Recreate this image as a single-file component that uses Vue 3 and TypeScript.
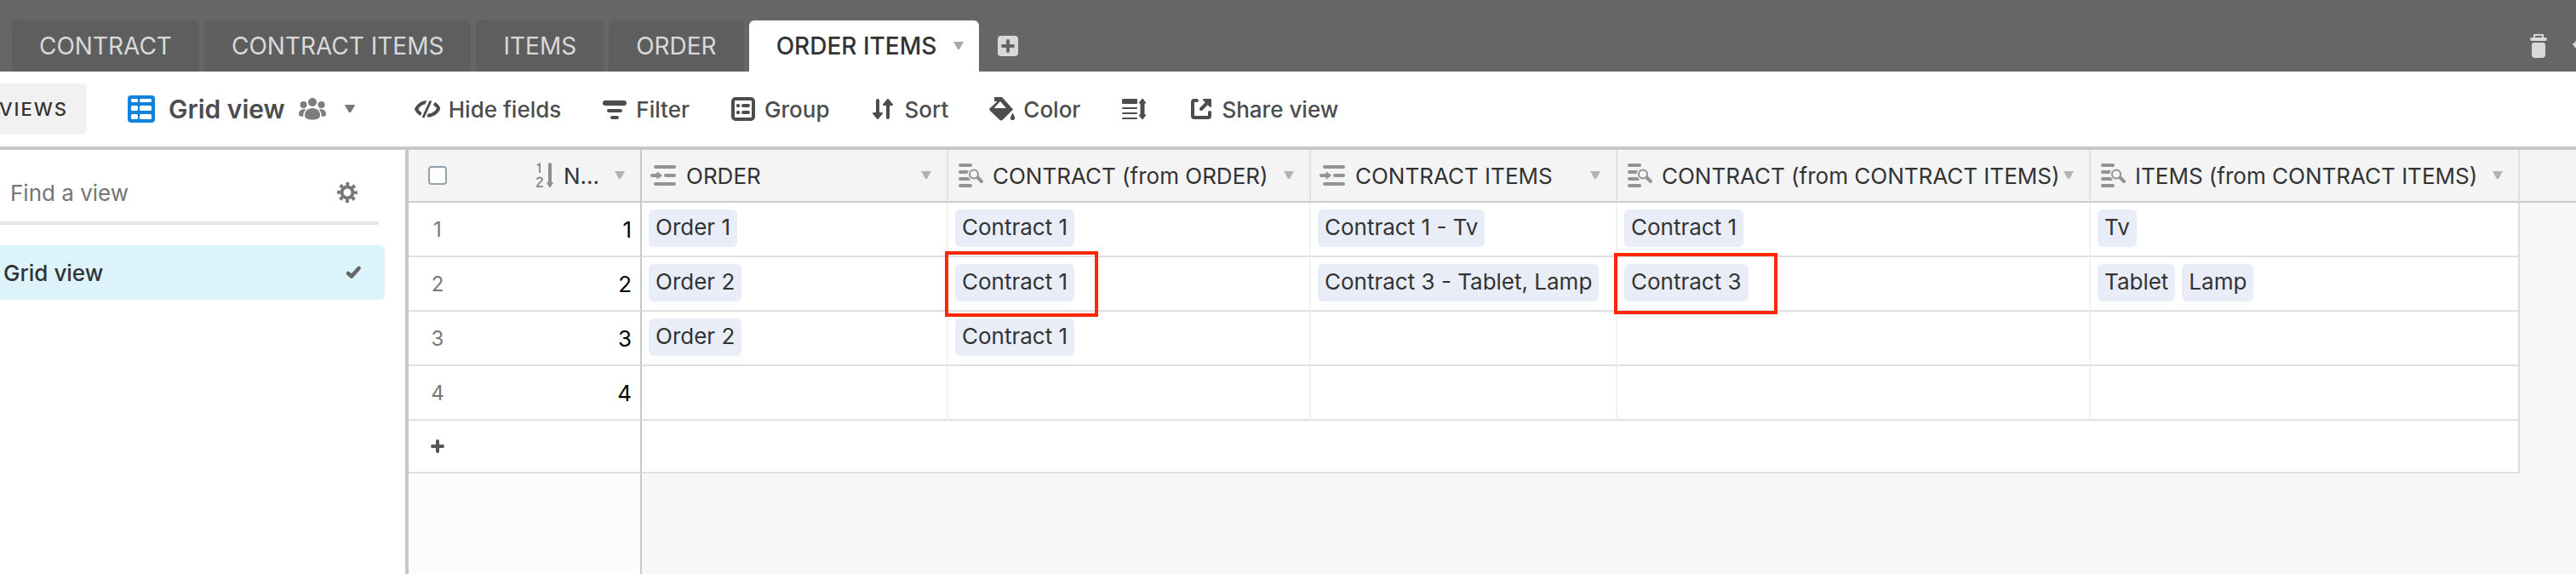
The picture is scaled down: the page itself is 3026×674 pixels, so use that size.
<script setup lang="ts">
import { ref } from 'vue'

interface Column {
  name: string
  kind: 'link' | 'lookup'
  size: string
}

interface Cell {
  chips: string[]
  mark?: string
}

interface Row {
  id: number
  cells: Cell[]
}

const tabs = ['CONTRACT', 'CONTRACT ITEMS', 'ITEMS', 'ORDER', 'ORDER ITEMS']
const activeTab = ref('ORDER ITEMS')
const search = ref('')

const columns: Column[] = [
  { name: 'ORDER', kind: 'link', size: 'c-order' },
  { name: 'CONTRACT (from ORDER)', kind: 'lookup', size: 'c-contract' },
  { name: 'CONTRACT ITEMS', kind: 'link', size: 'c-items' },
  { name: 'CONTRACT (from CONTRACT ITEMS)', kind: 'lookup', size: 'c-from-items' },
  { name: 'ITEMS (from CONTRACT ITEMS)', kind: 'lookup', size: 'c-last' },
]

const rows: Row[] = [
  {
    id: 1,
    cells: [
      { chips: ['Order 1'] },
      { chips: ['Contract 1'] },
      { chips: ['Contract 1 - Tv'] },
      { chips: ['Contract 1'] },
      { chips: ['Tv'] },
    ],
  },
  {
    id: 2,
    cells: [
      { chips: ['Order 2'] },
      { chips: ['Contract 1'], mark: 'mark-a' },
      { chips: ['Contract 3 - Tablet, Lamp'] },
      { chips: ['Contract 3'], mark: 'mark-b' },
      { chips: ['Tablet', 'Lamp'] },
    ],
  },
  {
    id: 3,
    cells: [
      { chips: ['Order 2'] },
      { chips: ['Contract 1'] },
      { chips: [] },
      { chips: [] },
      { chips: [] },
    ],
  },
  { id: 4, cells: [{ chips: [] }, { chips: [] }, { chips: [] }, { chips: [] }, { chips: [] }] },
]
</script>

<template>
  <div class="app">
    <header class="topbar">
      <nav class="tabs" aria-label="Tables">
        <button
          v-for="tab in tabs"
          :key="tab"
          type="button"
          class="tab"
          :class="{ active: tab === activeTab }"
          @click="activeTab = tab"
        >
          {{ tab }}
          <svg v-if="tab === activeTab" class="caret" width="12" height="10" viewBox="0 0 12 10">
            <path d="M0 0H12L7 9H5Z" fill="#aaa" />
          </svg>
        </button>
      </nav>
      <button type="button" class="bare" aria-label="Add table">
        <svg width="24" height="24" viewBox="0 0 24 24">
          <rect width="24" height="24" rx="4" fill="#d9d9d9" />
          <path d="M12 6V18M6 12H18" stroke="#666" stroke-width="4" stroke-linecap="round" />
        </svg>
      </button>
      <div class="topbar-end">
        <button type="button" class="bare" aria-label="Trash">
          <svg width="20" height="28" viewBox="0 0 20 28" fill="#d9d9d9">
            <path d="M5 5V1H15V5" fill="none" stroke="#d9d9d9" stroke-width="2" />
            <rect y="4" width="20" height="4" rx="2" />
            <path d="M2 13Q2 10 5 10H15Q18 10 18 13V24Q18 28 14 28H6Q2 28 2 24Z" />
          </svg>
        </button>
        <button type="button" class="bare" aria-label="History">
          <svg width="4" height="28" viewBox="0 0 4 28">
            <path d="M4 7L2.500 10.500H0.800Q-0.200 11 0.400 12.500L4 17Z" fill="#d9d9d9" />
          </svg>
        </button>
      </div>
    </header>

    <div class="toolbar">
      <button type="button" class="views">VIEWS</button>
      <button type="button" class="view-name">
        <svg width="32" height="32" viewBox="0 0 32 32">
          <rect width="32" height="32" rx="4" fill="#1283da" />
          <g fill="#fff">
            <rect x="4" y="4" width="8" height="4" rx="1.500" />
            <rect x="14" y="4" width="14" height="4" rx="1.500" />
            <rect x="4" y="12" width="8" height="6" rx="1.500" />
            <rect x="14" y="12" width="14" height="6" rx="1.500" />
            <rect x="4" y="22" width="8" height="6" rx="1.500" />
            <rect x="14" y="22" width="14" height="6" rx="1.500" />
          </g>
        </svg>
        <span>Grid view</span>
        <svg class="people" width="32" height="26" viewBox="0 0 32 26" fill="#7d7d7d">
          <circle cx="16" cy="5" r="5" />
          <circle cx="5.500" cy="8" r="4" />
          <circle cx="26.500" cy="8" r="4" />
          <path d="M16 12C22 12 25 16 25 20C25 24 22 25.500 16 25.500S7 24 7 20C7 16 10 12 16 12Z" />
          <path d="M8.500 13.500C6 15.500 5 18.500 5.300 21.800C2 22 0 21.500 0 19C0 15 3 12.500 8.500 13.500Z" />
          <path d="M23.500 13.500C26 15.500 27 18.500 26.700 21.800C30 22 32 21.500 32 19C32 15 29 12.500 23.500 13.500Z" />
        </svg>
        <svg class="view-caret" width="12" height="10" viewBox="0 0 12 10">
          <path d="M0.500 0H11.500Q12.200 0.500 11.700 1.300L7 9H5L0.300 1.300Q-0.200 0.500 0.500 0Z" fill="#777" />
        </svg>
      </button>

      <div class="actions">
        <button type="button">
          <svg width="30" height="28" viewBox="0 0 30 28" fill="none" stroke="#4d4d4d">
            <path d="M15 6C8 6 4 10.500 2 14C3 16.500 5 18.700 8 20.500" stroke-width="4" />
            <path d="M23 7.500C26 9.500 27.500 11.500 28.300 13.500C26 18 21.500 21.500 15 21.800" stroke-width="4" />
            <path d="M18 4L10 24" stroke="#fff" stroke-width="7" />
            <path d="M18.500 5.500L10.500 23" stroke-width="3" stroke-linecap="round" />
          </svg>
          Hide fields
        </button>
        <button type="button">
          <svg width="30" height="28" viewBox="0 0 30 28" fill="#4d4d4d">
            <rect x="1" y="4" width="28" height="6" rx="3" />
            <rect x="6" y="14" width="18" height="4" rx="2" />
            <rect x="10" y="22" width="10" height="4" rx="2" />
          </svg>
          Filter
        </button>
        <button type="button">
          <svg width="30" height="28" viewBox="0 0 30 28" fill="#4d4d4d">
            <rect x="3" y="2" width="24" height="24" rx="3" fill="none" stroke="#4d4d4d" stroke-width="4" />
            <rect x="7" y="8" width="4" height="4" rx="1.500" />
            <rect x="13" y="8" width="10" height="4" rx="2" />
            <rect x="7" y="16" width="4" height="4" rx="1.500" />
            <rect x="13" y="16" width="10" height="4" rx="2" />
          </svg>
          Group
        </button>
        <button type="button">
          <svg width="30" height="28" viewBox="0 0 30 28" fill="#4d4d4d" stroke="#4d4d4d" stroke-linecap="round" stroke-linejoin="round">
            <path d="M9 4V20M21 24V8" stroke-width="4" />
            <path d="M4 19H14L9 25ZM16 9H26L21 3Z" stroke-width="2" />
          </svg>
          Sort
        </button>
        <button type="button">
          <svg width="30" height="28" viewBox="0 0 30 28" fill="#4d4d4d">
            <path d="M6 0H15L28 14.500L16 26.500Q14 28.500 12 26.500L1 16Q-0.500 14.500 1 13L9.500 5H6Z" />
            <path d="M13 5L20 13H5.500Z" fill="#fff" />
            <path d="M27.500 18.500C29.500 22 30.500 23.500 30 25.500C29.500 27.500 25.500 27.500 25 25.500C24.600 23.500 25.800 22 27.500 18.500Z" />
          </svg>
          Color
        </button>
        <button type="button" aria-label="Row height">
          <svg width="30" height="28" viewBox="0 0 30 28" fill="#4d4d4d">
            <rect x="1" y="2" width="18" height="6" rx="1" />
            <rect x="1" y="12" width="18" height="2" rx="1" />
            <rect x="1" y="18" width="18" height="2" rx="1" />
            <rect x="1" y="24" width="18" height="2" rx="1" />
            <path d="M25 2L29 7H27V21H29L25 26L21 21H23V7H21Z" stroke="#4d4d4d" stroke-linejoin="round" />
          </svg>
        </button>
        <button type="button">
          <svg width="30" height="28" viewBox="0 0 30 28" fill="none" stroke="#4d4d4d" stroke-width="4" stroke-linecap="round">
            <path d="M11 4H8Q6 4 6 6V22Q6 24 8 24H24Q26 24 26 22V18" stroke-linejoin="round" />
            <path d="M16 14L24 6" />
            <path d="M19 3H27V11Z" fill="#4d4d4d" stroke-width="2" stroke-linejoin="round" />
          </svg>
          Share view
        </button>
      </div>
    </div>

    <div class="body">
      <aside class="sidebar">
        <div class="search">
          <input v-model="search" type="text" placeholder="Find a view" aria-label="Find a view" />
          <button type="button" class="bare" aria-label="View settings">
            <svg width="24" height="24" viewBox="0 0 24 24" fill="none" stroke="#777">
              <circle cx="12" cy="12" r="6.500" stroke-width="4" />
              <circle cx="12" cy="12" r="10" stroke-width="4" stroke-dasharray="3.800 4.054" stroke-dashoffset="1.900" />
            </svg>
          </button>
        </div>
        <button type="button" class="view-item">
          <span>Grid view</span>
          <svg width="18" height="16" viewBox="0 0 18 16">
            <path d="M3 9L7 12.500L15.500 3" fill="none" stroke="#666" stroke-width="4.500" stroke-linecap="round" stroke-linejoin="round" />
          </svg>
        </button>
      </aside>

      <main class="grid">
        <table>
          <colgroup>
            <col class="c-num" />
            <col class="c-name" />
            <col v-for="col in columns" :key="col.name" :class="col.size" />
            <col />
          </colgroup>
          <thead>
            <tr>
              <th class="num">
                <input type="checkbox" aria-label="Select all rows" />
              </th>
              <th class="pinned">
                <div class="head head-name">
                  <svg width="20" height="30" viewBox="0 0 20 30">
                    <g fill="none" stroke="#8f8f8f" stroke-width="2">
                      <path d="M1 3L4 1.500V12" />
                      <path d="M1 20C1 16.500 7 16.500 7 20C7 22.500 1 24.500 1 28H8" />
                    </g>
                    <path d="M16 2V24" stroke="#8f8f8f" stroke-width="4" stroke-linecap="round" />
                    <path d="M12.500 23.500H19.500L16 29Z" fill="#8f8f8f" stroke="#8f8f8f" stroke-linejoin="round" />
                  </svg>
                  <span class="label">N...</span>
                  <button type="button" class="bare" aria-label="Column menu">
                    <svg width="12" height="10" viewBox="0 0 12 10"><path d="M0 0H12L7 9H5Z" fill="#b3b3b3" /></svg>
                  </button>
                </div>
              </th>
              <th v-for="col in columns" :key="col.name">
                <div class="head">
                  <svg v-if="col.kind === 'link'" width="32" height="28" viewBox="0 0 32 28" fill="#939393">
                    <rect x="4" y="2" width="26" height="4" rx="2" />
                    <rect x="16" y="12" width="14" height="4" rx="2" />
                    <rect x="4" y="22" width="26" height="4" rx="2" />
                    <rect x="0" y="12" width="11" height="4" rx="2" />
                    <path d="M8 10L13.500 14L8 18Z" stroke="#939393" stroke-linejoin="round" />
                  </svg>
                  <svg v-else width="32" height="28" viewBox="0 0 32 28" fill="#939393">
                    <rect x="2" y="0" width="16" height="4" rx="2" />
                    <rect x="2" y="8" width="14" height="4" rx="2" />
                    <rect x="2" y="16" width="14" height="4" rx="2" />
                    <rect x="2" y="24" width="16" height="4" rx="2" />
                    <circle cx="20" cy="12.500" r="7.500" fill="#f4f4f4" />
                    <circle cx="20" cy="12.500" r="5" fill="none" stroke="#939393" stroke-width="2" />
                    <path d="M24.500 16.500L29 21" stroke="#939393" stroke-width="4" stroke-linecap="round" />
                  </svg>
                  <span class="label">{{ col.name }}</span>
                  <button type="button" class="bare" aria-label="Column menu">
                    <svg width="12" height="10" viewBox="0 0 12 10"><path d="M0 0H12L7 9H5Z" fill="#b3b3b3" /></svg>
                  </button>
                </div>
              </th>
              <th class="rest"></th>
            </tr>
          </thead>
          <tbody>
            <tr v-for="row in rows" :key="row.id">
              <td class="num">{{ row.id }}</td>
              <td class="pinned value">{{ row.id }}</td>
              <td v-for="(cell, i) in row.cells" :key="i" class="cell">
                <div class="chips">
                  <span v-for="chip in cell.chips" :key="chip" class="chip">{{ chip }}</span>
                </div>
                <div v-if="cell.mark" class="mark" :class="cell.mark"></div>
              </td>
              <td class="rest"></td>
            </tr>
            <tr class="add-row">
              <td class="num">
                <button type="button" class="bare" aria-label="Add row">
                  <svg width="16" height="16" viewBox="0 0 16 16">
                    <path d="M8 2V14M2 8H14" stroke="#555" stroke-width="4" stroke-linecap="round" />
                  </svg>
                </button>
              </td>
              <td class="pinned"></td>
              <td :colspan="columns.length" class="add-wide"></td>
              <td class="rest"></td>
            </tr>
          </tbody>
        </table>
        <div class="below"></div>
      </main>
    </div>
  </div>
</template>

<style>
body {
  margin: 0;
}
</style>

<style scoped>
.app {
  display: flex;
  flex-direction: column;
  min-height: 100vh;
  overflow: hidden;
  background: #fff;
  color: #333;
  font-family: Inter, "Liberation Sans", sans-serif;
  font-size: 26px;
}
.app * {
  box-sizing: border-box;
}
button {
  border: 0;
  padding: 0;
  background: none;
  color: inherit;
  font: inherit;
  white-space: nowrap;
  cursor: pointer;
}
svg {
  display: block;
  flex: none;
}

.topbar {
  display: flex;
  align-items: flex-end;
  height: 84px;
  padding-left: 14px;
  background: #666;
}
.topbar > .bare {
  margin: 0 0 18px 22px;
}
.tabs {
  display: flex;
  gap: 6px;
}
.tab {
  display: flex;
  align-items: center;
  gap: 20px;
  height: 60px;
  padding: 0 32px;
  border-radius: 6px 6px 0 0;
  background: #5e5e5e;
  color: #d9d9d9;
  font-size: 28px;
}
.tab.active {
  padding-right: 18px;
  background: #fff;
  color: #333;
  font-weight: 500;
}
.topbar-end {
  display: flex;
  gap: 30px;
  margin: 0 0 16px auto;
}

.toolbar {
  display: flex;
  align-items: center;
  height: 92px;
  border-bottom: 4px solid #c8c8c8;
  color: #4d4d4d;
  font-weight: 500;
}
.views {
  display: flex;
  align-items: center;
  justify-content: flex-end;
  width: 102px;
  height: 60px;
  padding-right: 22px;
  border-radius: 0 6px 6px 0;
  background: #f1f1f1;
  color: #333;
  font-size: 22px;
  letter-spacing: 2px;
}
.view-name {
  display: flex;
  align-items: center;
  margin-left: 48px;
  font-size: 30px;
  font-weight: 600;
}
.view-name span {
  margin-left: 16px;
}
.people {
  margin-left: 16px;
}
.view-caret {
  margin-left: 22px;
}
.actions {
  display: flex;
  align-items: center;
  gap: 48px;
  margin-left: 70px;
}
.actions button {
  display: flex;
  align-items: center;
  gap: 10px;
}

.body {
  display: flex;
  flex: 1;
}
.sidebar {
  width: 480px;
  flex: none;
  border-right: 4px solid #c8c8c8;
}
.search {
  display: flex;
  align-items: center;
  justify-content: space-between;
  width: 444px;
  height: 88px;
  padding: 16px 24px 0 12px;
  border-bottom: 4px solid #e5e5e5;
}
.search input {
  flex: 1;
  min-width: 0;
  padding: 0;
  border: 0;
  outline: 0;
  color: #333;
  font: inherit;
}
.search input::placeholder {
  color: #757575;
  opacity: 1;
}
.view-item {
  display: flex;
  align-items: center;
  justify-content: space-between;
  width: 452px;
  height: 64px;
  margin-top: 24px;
  padding: 0 28px 0 4px;
  border-radius: 0 6px 6px 0;
  background: #ddf4fd;
  font-weight: 500;
}

.grid {
  display: flex;
  flex: 1;
  flex-direction: column;
  min-width: 0;
}
table {
  width: 100%;
  border-spacing: 0;
  table-layout: fixed;
}
.c-num {
  width: 68px;
}
.c-name {
  width: 206px;
}
.c-order,
.c-items {
  width: 360px;
}
.c-contract {
  width: 426px;
}
.c-from-items {
  width: 556px;
}
.c-last {
  width: 504px;
}
th {
  height: 62px;
  padding: 0;
  border-right: 2px solid #dde0e4;
  border-bottom: 2px solid #ccc;
  background: #f4f4f4;
  font-weight: 400;
  text-align: left;
}
th.num,
td.num {
  border-right: 0;
  text-align: center;
}
th.pinned,
td.pinned {
  border-right: 2px solid #c8c8c8;
}
th.rest {
  border-right: 0;
}
.head {
  display: flex;
  align-items: center;
  padding: 0 18px 0 10px;
}
.head .label {
  flex: 1;
  margin-left: 10px;
  white-space: nowrap;
}
.head-name {
  justify-content: flex-end;
}
.head-name .label {
  flex: none;
  margin: 0 18px 0 12px;
}
input[type="checkbox"] {
  display: block;
  width: 22px;
  height: 22px;
  margin: 0 auto;
  appearance: none;
  border: 2px solid #93a1aa;
  border-radius: 4px;
  background: #fff;
}
td {
  height: 64px;
  padding: 0;
  border-right: 2px solid #f2f2f2;
  border-bottom: 2px solid #dde1e5;
  background: #fff;
}
td.num {
  color: #777;
  font-size: 24px;
}
td.num button {
  display: block;
  margin: 0 auto;
}
td.value {
  padding-right: 10px;
  color: #000;
  text-align: right;
}
td.cell {
  position: relative;
  padding: 8px;
  vertical-align: top;
}
td.cell:nth-last-child(2),
td.add-wide {
  border-right-color: #d8dde2;
}
td.rest {
  border: 0;
  background: #f7f7f7;
}
.add-row td {
  height: 62px;
}
.chips {
  display: flex;
  gap: 8px;
}
.chip {
  height: 44px;
  padding: 0 8px;
  border-radius: 6px;
  background: #e9edf8;
  line-height: 42px;
  white-space: nowrap;
}
.mark {
  position: absolute;
  z-index: 1;
  border: 4px solid #ff2600;
}
.mark-a {
  top: -7px;
  left: -4px;
  width: 180px;
  height: 77px;
}
.mark-b {
  top: -5px;
  left: -4px;
  width: 192px;
  height: 72px;
}
.below {
  flex: 1;
  border-left: 272px solid #fcfcfc;
  background: #f7f7f7;
  box-shadow: inset 2px 0 #c8c8c8;
}
</style>
